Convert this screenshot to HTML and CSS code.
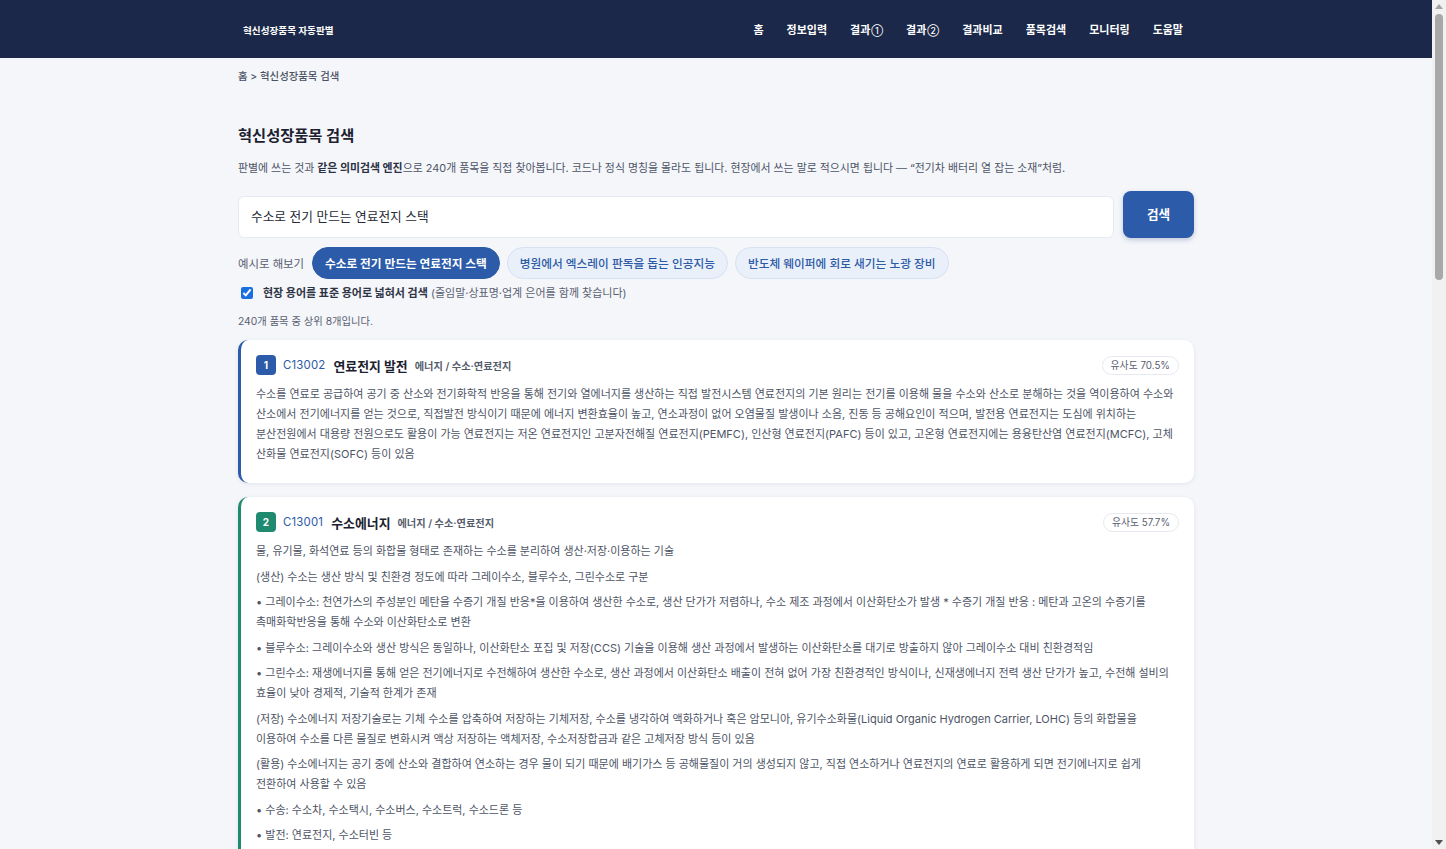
FILE: index.html
```html
<!DOCTYPE html>
<html lang="ko">
<head>
<meta charset="utf-8">
<title>혁신성장품목 검색</title>
<link rel="stylesheet" href="styles.css">
</head>
<body>
<header class="topbar">
  <div class="topbar-inner">
    <div class="brand">혁신성장품목 자동판별</div>
    <nav class="nav">
      <a href="#">홈</a>
      <a href="#">정보입력</a>
      <a href="#">결과<span class="circ">①</span></a>
      <a href="#">결과<span class="circ">②</span></a>
      <a href="#">결과비교</a>
      <a href="#">품목검색</a>
      <a href="#">모니터링</a>
      <a href="#">도움말</a>
    </nav>
  </div>
</header>

<main class="container">
  <div class="breadcrumb">홈 &gt; 혁신성장품목 검색</div>

  <h1 class="page-title">혁신성장품목 검색</h1>
  <p class="lead">판별에 쓰는 것과 <b>같은 의미검색 엔진</b>으로 240개 품목을 직접 찾아봅니다. 코드나 정식 명칭을 몰라도 됩니다. 현장에서 쓰는 말로 적으시면 됩니다 — “전기차 배터리 열 잡는 소재”처럼.</p>

  <form class="search-row">
    <input class="search-input" type="text" value="수소로 전기 만드는 연료전지 스택">
    <button class="search-btn" type="button">검색</button>
  </form>

  <div class="examples">
    <span class="examples-label">예시로 해보기</span>
    <button class="chip chip-active" type="button">수소로 전기 만드는 연료전지 스택</button>
    <button class="chip" type="button">병원에서 엑스레이 판독을 돕는 인공지능</button>
    <button class="chip" type="button">반도체 웨이퍼에 회로 새기는 노광 장비</button>
  </div>

  <label class="expand">
    <input type="checkbox" checked>
    <span><b>현장 용어를 표준 용어로 넓혀서 검색</b> (줄임말·상표명·업계 은어를 함께 찾습니다)</span>
  </label>

  <div class="result-count">240개 품목 중 상위 8개입니다.</div>

  <section class="results">
    <article class="card card-blue">
      <div class="card-head">
        <span class="rank">1</span>
        <span class="code">C13002</span>
        <span class="name">연료전지 발전</span>
        <span class="cat">에너지 / 수소·연료전지</span>
        <span class="sim">유사도 70.5%</span>
      </div>
      <div class="card-body">
        <p>수소를 연료로 공급하여 공기 중 산소와 전기화학적 반응을 통해 전기와 열에너지를 생산하는 직접 발전시스템 연료전지의 기본 원리는 전기를 이용해 물을 수소와 산소로 분해하는 것을 역이용하여 수소와 산소에서 전기에너지를 얻는 것으로, 직접발전 방식이기 때문에 에너지 변환효율이 높고, 연소과정이 없어 오염물질 발생이나 소음, 진동 등 공해요인이 적으며, 발전용 연료전지는 도심에 위치하는 분산전원에서 대용량 전원으로도 활용이 가능 연료전지는 저온 연료전지인 고분자전해질 연료전지(PEMFC), 인산형 연료전지(PAFC) 등이 있고, 고온형 연료전지에는 용융탄산염 연료전지(MCFC), 고체 산화물 연료전지(SOFC) 등이 있음</p>
      </div>
    </article>

    <article class="card card-green">
      <div class="card-head">
        <span class="rank">2</span>
        <span class="code">C13001</span>
        <span class="name">수소에너지</span>
        <span class="cat">에너지 / 수소·연료전지</span>
        <span class="sim">유사도 57.7%</span>
      </div>
      <div class="card-body">
        <p>물, 유기물, 화석연료 등의 화합물 형태로 존재하는 수소를 분리하여 생산·저장·이용하는 기술</p>
        <p>(생산) 수소는 생산 방식 및 친환경 정도에 따라 그레이수소, 블루수소, 그린수소로 구분</p>
        <p>• 그레이수소: 천연가스의 주성분인 메탄을 수증기 개질 반응*을 이용하여 생산한 수소로, 생산 단가가 저렴하나, 수소 제조 과정에서 이산화탄소가 발생 * 수증기 개질 반응 : 메탄과 고온의 수증기를 촉매화학반응을 통해 수소와 이산화탄소로 변환</p>
        <p>• 블루수소: 그레이수소와 생산 방식은 동일하나, 이산화탄소 포집 및 저장(CCS) 기술을 이용해 생산 과정에서 발생하는 이산화탄소를 대기로 방출하지 않아 그레이수소 대비 친환경적임</p>
        <p>• 그린수소: 재생에너지를 통해 얻은 전기에너지로 수전해하여 생산한 수소로, 생산 과정에서 이산화탄소 배출이 전혀 없어 가장 친환경적인 방식이나, 신재생에너지 전력 생산 단가가 높고, 수전해 설비의 효율이 낮아 경제적, 기술적 한계가 존재</p>
        <p>(저장) 수소에너지 저장기술로는 기체 수소를 압축하여 저장하는 기체저장, 수소를 냉각하여 액화하거나 혹은 암모니아, 유기수소화물(Liquid Organic Hydrogen Carrier, LOHC) 등의 화합물을 이용하여 수소를 다른 물질로 변화시켜 액상 저장하는 액체저장, 수소저장합금과 같은 고체저장 방식 등이 있음</p>
        <p>(활용) 수소에너지는 공기 중에 산소와 결합하여 연소하는 경우 물이 되기 때문에 배기가스 등 공해물질이 거의 생성되지 않고, 직접 연소하거나 연료전지의 연료로 활용하게 되면 전기에너지로 쉽게 전환하여 사용할 수 있음</p>
        <p>• 수송: 수소차, 수소택시, 수소버스, 수소트럭, 수소드론 등</p>
        <p>• 발전: 연료전지, 수소터빈 등</p>
      </div>
    </article>
  </section>
</main>

<div class="scrollbar" aria-hidden="true">
  <span class="sb-arrow sb-up"></span>
  <span class="sb-thumb"></span>
  <span class="sb-track"></span>
  <span class="sb-arrow sb-down"></span>
</div>
</body>
</html>
```

FILE: styles.css
```css
* { box-sizing: border-box; }

html, body {
  margin: 0;
  padding: 0;
}

body {
  background: #f4f6fa;
  color: #1f2430;
  font-family: Inter, "Noto Sans CJK KR", "Noto Sans", sans-serif;
  word-break: keep-all;
  margin-right: 14px;
}

/* decorative browser scrollbar, overlaid on the right edge */
.scrollbar {
  position: fixed;
  top: 0;
  right: 0;
  width: 14px;
  height: 100vh;
  background: #f1f1f1;
  display: flex;
  flex-direction: column;
  align-items: center;
}

.sb-arrow {
  width: 0;
  height: 0;
  border-left: 4px solid transparent;
  border-right: 4px solid transparent;
  flex: none;
}

.sb-up {
  border-bottom: 5px solid #a3a3a3;
  margin-top: 4px;
}

.sb-down {
  border-top: 5px solid #505050;
  margin-bottom: 4px;
}

.sb-thumb {
  width: 8px;
  height: 266px;
  margin-top: 5px;
  background: #a8a8a8;
  border-radius: 4px;
  flex: none;
}

.sb-track {
  flex: 1;
}

.topbar {
  background: #1b2849;
  height: 58px;
}

.topbar-inner {
  max-width: 956px;
  height: 100%;
  margin: 0 auto;
  padding: 0 11px 0 5px;
  display: flex;
  align-items: center;
  justify-content: space-between;
}

.brand {
  color: #ffffff;
  font-size: 9.6px;
  font-weight: 700;
  margin-top: 2px;
}

.nav {
  display: flex;
  gap: 23px;
}

.nav a {
  color: #ffffff;
  text-decoration: none;
  font-size: 11px;
  font-weight: 700;
}

.nav .circ {
  font-size: 8.5px;
  font-weight: 500;
  margin-left: 1px;
}

.container {
  max-width: 956px;
  margin: 0 auto;
  padding: 12px 0 40px;
}

.breadcrumb {
  font-size: 10.4px;
  color: #4a5163;
  font-weight: 500;
  line-height: 14px;
}

.page-title {
  font-size: 15.3px;
  font-weight: 700;
  margin: 42px 0 0;
  line-height: 20px;
  color: #1c2130;
}

.lead {
  font-size: 10.9px;
  color: #4d5466;
  margin: 14px 0 0;
  line-height: 16px;
}

.lead b {
  color: #2a3042;
  font-weight: 700;
}

.search-row {
  display: flex;
  align-items: flex-end;
  gap: 9px;
  margin-top: 15px;
}

.search-input {
  flex: 1;
  height: 42px;
  border: 1px solid #e6e9ef;
  border-radius: 6px;
  background: #ffffff;
  padding: 0 12px 3px;
  font-family: inherit;
  font-size: 12.7px;
  color: #262b36;
  outline: none;
}

.search-btn {
  width: 71px;
  height: 47px;
  border: none;
  border-radius: 8px;
  background: #2b5ba9;
  color: #ffffff;
  font-family: inherit;
  font-size: 12.6px;
  font-weight: 700;
  padding: 0 0 3px;
  box-shadow: 0 2px 5px rgba(30, 60, 120, 0.25);
}

.examples {
  display: flex;
  align-items: center;
  gap: 7px;
  margin-top: 9px;
}

.examples-label {
  font-size: 11.4px;
  color: #5a6070;
  margin-right: 1px;
}

.chip {
  height: 32px;
  padding: 0 12px 1px;
  border-radius: 16px;
  border: 1px solid #d6e1f2;
  background: #eaf0fa;
  color: #2c5aa6;
  font-family: inherit;
  font-size: 11.7px;
  font-weight: 500;
  white-space: nowrap;
}

.chip-active {
  background: #2b5ba9;
  border-color: #2b5ba9;
  color: #ffffff;
  font-weight: 700;
}

.expand {
  display: flex;
  align-items: center;
  gap: 10px;
  margin-top: 6px;
  padding-left: 3px;
  font-size: 11px;
  color: #5a6070;
  line-height: 16px;
}

.expand input {
  width: 12px;
  height: 12px;
  margin: 0;
  accent-color: #1a6fe0;
}

.expand b {
  color: #2e3444;
  font-weight: 700;
}

.result-count {
  font-size: 10.3px;
  color: #5a6070;
  margin-top: 13px;
  line-height: 14px;
}

.results {
  display: flex;
  flex-direction: column;
  gap: 14px;
  margin-top: 12px;
}

.card {
  background: #ffffff;
  border-radius: 10px;
  border-left: 3px solid #2b5ba9;
  padding: 15px 15px 19px 15px;
  box-shadow: 0 1px 4px rgba(20, 30, 60, 0.08);
}

.card-green {
  border-left-color: #1f8a6f;
}

.card-head {
  display: flex;
  align-items: center;
  height: 20px;
  margin-bottom: 9px;
}

.rank {
  width: 20px;
  height: 20px;
  border-radius: 4px;
  background: #2b5ba9;
  color: #ffffff;
  font-size: 10px;
  font-weight: 700;
  display: flex;
  align-items: center;
  justify-content: center;
  margin-right: 7px;
}

.card-green .rank {
  background: #1f8a6f;
}

.code {
  color: #2c5aa6;
  font-size: 11.4px;
  margin-right: 8px;
  letter-spacing: 0.2px;
}

.name {
  font-size: 12.9px;
  font-weight: 700;
  color: #1c2130;
  margin-right: 7px;
}

.cat {
  font-size: 10.2px;
  font-weight: 600;
  color: #555c6c;
}

.sim {
  margin-left: auto;
  font-size: 9.8px;
  color: #5a6070;
  border: 1px solid #e6e9ef;
  border-radius: 10px;
  height: 19px;
  padding: 0 8px;
  display: flex;
  align-items: center;
}

.card-body {
  display: flex;
  flex-direction: column;
  gap: 5.5px;
}

.card-body p {
  margin: 0;
  font-size: 11px;
  line-height: 20px;
  color: #4d5465;
}
```
